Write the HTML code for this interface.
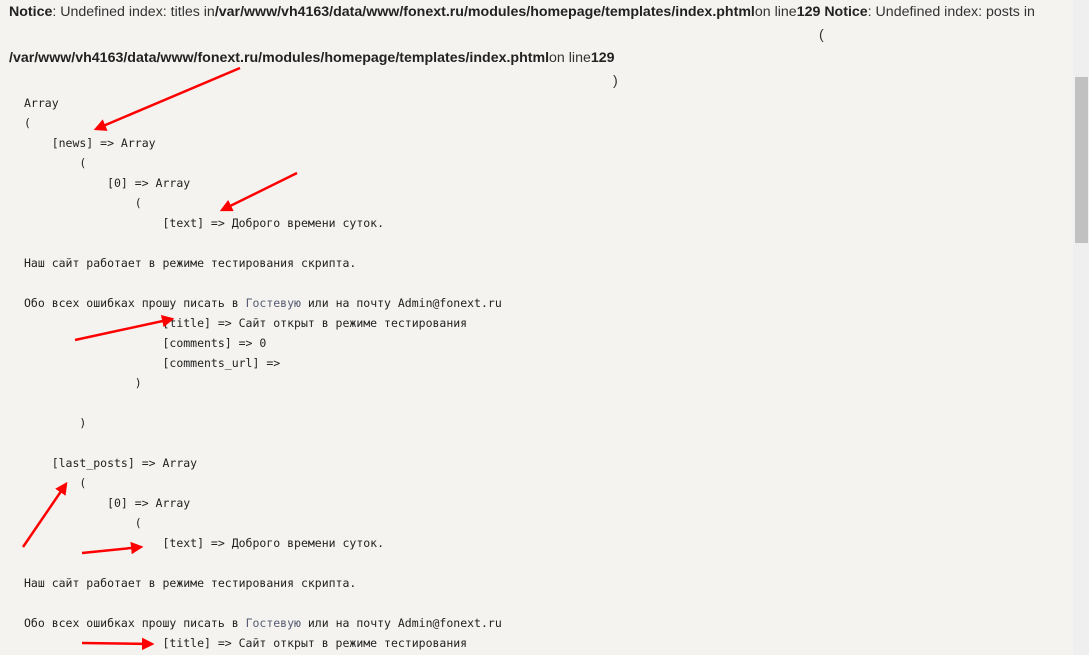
<!DOCTYPE html>
<html><head><meta charset="utf-8"><style>
body{margin:0;width:1089px;height:655px;background:#f4f3f0;overflow:hidden;position:relative;font-family:"Liberation Sans",sans-serif;color:#222}
.n{position:absolute;font-size:14.2px;white-space:nowrap;color:#333}
.n b{color:#222}
pre{position:absolute;left:24px;top:93px;margin:0;font-family:"DejaVu Sans Mono","Liberation Mono",monospace;font-size:11.5px;line-height:20px;color:#222}
pre span{color:#555a70}
.sb{position:absolute;left:1073px;top:0;width:16px;height:655px;background:#efefef}
.th{position:absolute;left:1075px;top:77px;width:13px;height:166px;background:#c1c1c1}
</style></head><body>
<div class="n" style="left:9px;top:4px"><b>Notice</b>: Undefined index: titles in<b>/var/www/vh4163/data/www/fonext.ru/modules/homepage/templates/index.phtml</b>on line<b>129</b> <b>Notice</b>: Undefined index: posts in</div>
<div class="n" style="left:819px;top:27px">(</div>
<div class="n" style="left:9px;top:50px"><b>/var/www/vh4163/data/www/fonext.ru/modules/homepage/templates/index.phtml</b>on line<b>129</b></div>
<div class="n" style="left:613px;top:73px">)</div>
<pre>Array
(
    [news] =&gt; Array
        (
            [0] =&gt; Array
                (
                    [text] =&gt; Доброго времени суток.

Наш сайт работает в режиме тестирования скрипта.

Обо всех ошибках прошу писать в <span>Гостевую</span> или на почту Admin@fonext.ru
                    [title] =&gt; Сайт открыт в режиме тестирования
                    [comments] =&gt; 0
                    [comments_url] =&gt; 
                )

        )

    [last_posts] =&gt; Array
        (
            [0] =&gt; Array
                (
                    [text] =&gt; Доброго времени суток.

Наш сайт работает в режиме тестирования скрипта.

Обо всех ошибках прошу писать в <span>Гостевую</span> или на почту Admin@fonext.ru
                    [title] =&gt; Сайт открыт в режиме тестирования
</pre>
<svg style="position:absolute;left:0;top:0" width="1089" height="655">
<defs><marker id="a" markerWidth="5" markerHeight="5" refX="4" refY="2.5" orient="auto"><path d="M0,0L5,2.5L0,5z" fill="#f00"/></marker></defs>
<g stroke="#f00" stroke-width="2.5" marker-end="url(#a)">
<line x1="240" y1="68" x2="96" y2="129"/>
<line x1="297" y1="173" x2="222" y2="210"/>
<line x1="75" y1="340" x2="172" y2="319"/>
<line x1="23" y1="547" x2="66" y2="484"/>
<line x1="82" y1="553" x2="141" y2="547"/>
<line x1="82" y1="643" x2="152" y2="644"/>
</g></svg>
<div class="sb"></div><div class="th"></div>
</body></html>
